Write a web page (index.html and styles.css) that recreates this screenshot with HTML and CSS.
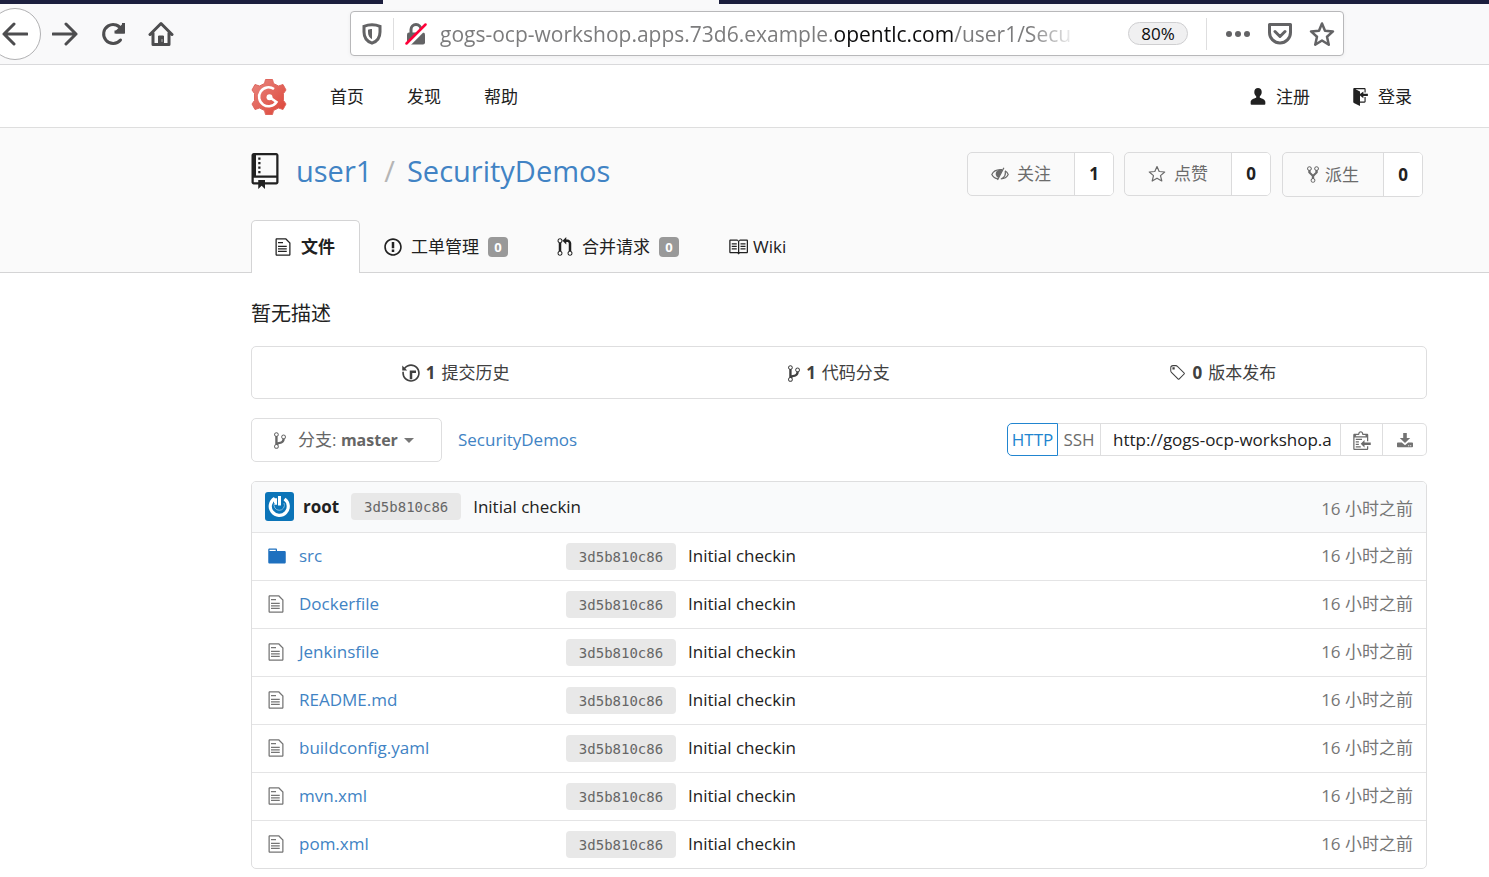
FILE: index.html
```html
<!DOCTYPE html>
<html lang="zh-CN">
<head>
<meta charset="utf-8">
<title>user1/SecurityDemos</title>
<link rel="stylesheet" href="styles.css">
</head>
<body>
<svg class="sprite" aria-hidden="true">
  <symbol id="repo" viewBox="0 0 12 16"><path d="M4 9H3V8h1v1zm0-3H3v1h1V6zm0-2H3v1h1V4zm0-2H3v1h1V2zm8-1v12c0 .55-.45 1-1 1H6v2l-1.5-1.5L3 16v-2H1c-.55 0-1-.45-1-1V1c0-.55.45-1 1-1h10c.55 0 1 .45 1 1zm-1 10H1v2h2v-1h3v1h5v-2zm0-10H2v9h9V1z"/></symbol>
  <symbol id="file" viewBox="0 0 12 16"><path d="M6 5H2V4h4v1zM2 8h7V7H2v1zm0 2h7V9H2v1zm0 2h7v-1H2v1zm10-7.5V14c0 .55-.45 1-1 1H1c-.55 0-1-.45-1-1V2c0-.55.45-1 1-1h7.5L12 4.5zM11 5L8 2H1v12h10V5z"/></symbol>
  <symbol id="issue" viewBox="0 0 14 16"><path d="M7 2.3c3.14 0 5.7 2.56 5.7 5.7s-2.56 5.7-5.7 5.7A5.71 5.71 0 0 1 1.3 8c0-3.14 2.56-5.7 5.7-5.7zM7 1C3.14 1 0 4.14 0 8s3.14 7 7 7 7-3.14 7-7-3.14-7-7-7zm1 3H6v5h2V4zm0 6H6v2h2v-2z"/></symbol>
  <symbol id="pull" viewBox="0 0 12 16"><path d="M11 11.28V5c-.03-.78-.34-1.47-.94-2.06C9.46 2.35 8.78 2.03 8 2H7V0L4 3l3 3V4h1c.27.02.48.11.69.31.21.2.3.42.31.69v6.28A1.993 1.993 0 0 0 10 15a1.993 1.993 0 0 0 1-3.72zm-1 2.92c-.66 0-1.2-.55-1.2-1.2 0-.65.55-1.2 1.2-1.2.65 0 1.2.55 1.2 1.2 0 .65-.55 1.2-1.2 1.2zM4 3c0-1.11-.89-2-2-2a1.993 1.993 0 0 0-1 3.72v6.56A1.993 1.993 0 0 0 2 15a1.993 1.993 0 0 0 1-3.72V4.72c.59-.34 1-.98 1-1.72zm-.8 10c0 .66-.55 1.2-1.2 1.2-.65 0-1.2-.55-1.2-1.2 0-.65.55-1.2 1.2-1.2.65 0 1.2.55 1.2 1.2zM2 4.2C1.34 4.2.8 3.65.8 3c0-.65.55-1.2 1.2-1.2.65 0 1.2.55 1.2 1.2 0 .65-.55 1.2-1.2 1.2z"/></symbol>
  <symbol id="book" viewBox="0 0 16 16"><path d="M3 5h4v1H3V5zm0 3h4V7H3v1zm0 2h4V9H3v1zm11-5h-4v1h4V5zm0 2h-4v1h4V7zm0 2h-4v1h4V9zm2-6v9c0 .55-.45 1-1 1H9.5l-1 1-1-1H2c-.55 0-1-.45-1-1V3c0-.55.45-1 1-1h5.5l1 1 1-1H15c.55 0 1 .45 1 1zm-8 .5L7.5 3H2v9h6V3.5zm7-.5H9.5l-.5.5V12h6V3z"/></symbol>
  <symbol id="branch" viewBox="0 0 10 16"><path d="M10 5c0-1.11-.89-2-2-2a1.993 1.993 0 0 0-1 3.72v.3c-.02.52-.23.98-.63 1.38-.4.4-.86.61-1.38.63-.83.02-1.48.16-2 .45V4.72a1.993 1.993 0 0 0-1-3.72C.88 1 0 1.89 0 3a2 2 0 0 0 1 1.72v6.56c-.59.35-1 .99-1 1.72 0 1.11.89 2 2 2 1.11 0 2-.89 2-2 0-.53-.2-1-.53-1.36.09-.06.48-.41.59-.47.25-.11.56-.17.94-.17 1.05-.05 1.95-.45 2.75-1.25S8.95 7.77 9 6.73h-.02C9.59 6.37 10 5.73 10 5zM2 1.8c.66 0 1.2.55 1.2 1.2 0 .65-.55 1.2-1.2 1.2C1.35 4.2.8 3.65.8 3c0-.65.55-1.2 1.2-1.2zm0 12.41c-.66 0-1.2-.55-1.2-1.2 0-.65.55-1.2 1.2-1.2.65 0 1.2.55 1.2 1.2 0 .65-.55 1.2-1.2 1.2zm6-8c-.66 0-1.2-.55-1.2-1.2 0-.65.55-1.2 1.2-1.2.65 0 1.2.55 1.2 1.2 0 .65-.55 1.2-1.2 1.2z"/></symbol>
  <symbol id="fork" viewBox="0 0 10 16"><path d="M8 1a1.993 1.993 0 0 0-1 3.72V6L5 8 3 6V4.72A1.993 1.993 0 0 0 2 1a1.993 1.993 0 0 0-1 3.72V6.5l3 3v1.78A1.993 1.993 0 0 0 5 15a1.993 1.993 0 0 0 1-3.72V9.5l3-3V4.72A1.993 1.993 0 0 0 8 1zM2 4.2C1.34 4.2.8 3.65.8 3c0-.65.55-1.2 1.2-1.2.65 0 1.2.55 1.2 1.2 0 .65-.55 1.2-1.2 1.2zm3 10c-.66 0-1.2-.55-1.2-1.2 0-.65.55-1.2 1.2-1.2.65 0 1.2.55 1.2 1.2 0 .65-.55 1.2-1.2 1.2zm3-10c-.66 0-1.2-.55-1.2-1.2 0-.65.55-1.2 1.2-1.2.65 0 1.2.55 1.2 1.2 0 .65-.55 1.2-1.2 1.2z"/></symbol>
  <symbol id="history" viewBox="0 0 14 16"><path d="M8 13H6V6h5v2H8v5zM7 1C4.81 1 2.87 2.02 1.59 3.59L0 2v4h4L2.5 4.5C3.55 3.17 5.17 2.3 7 2.3c3.14 0 5.7 2.56 5.7 5.7s-2.56 5.7-5.7 5.7A5.71 5.71 0 0 1 1.3 8c0-.34.03-.67.09-1H.08C.03 7.33 0 7.66 0 8c0 3.86 3.14 7 7 7s7-3.14 7-7-3.14-7-7-7z"/></symbol>
  <symbol id="tag" viewBox="0 0 14 16"><path d="M7.685 1.72a2.49 2.49 0 0 0-1.76-.726H3.48A2.5 2.5 0 0 0 .994 3.48v2.456c0 .656.269 1.292.726 1.76l6.024 6.024a.99.99 0 0 0 1.402 0l4.563-4.563a.99.99 0 0 0 0-1.402L7.685 1.72zM2.366 7.048A1.54 1.54 0 0 1 1.9 5.925V3.48c0-.874.716-1.58 1.58-1.58h2.456c.418 0 .825.159 1.123.467l6.104 6.094-4.702 4.702-6.094-6.114zm.588-4.095h1.99v1.99h-1.99v-1.99z"/></symbol>
  <symbol id="folder" viewBox="0 0 14 16"><path d="M13 4H7V3c0-.66-.31-1-1-1H1c-.55 0-1 .45-1 1v10c0 .55.45 1 1 1h12c.55 0 1-.45 1-1V5c0-.55-.45-1-1-1zM6 4H1V3h5v1z"/></symbol>
  <symbol id="person" viewBox="0 0 14 16"><path d="M7 0C5 0 3.500 1.500 3.500 3.700c0 1.900.8 3.300 1.800 4.100v1.400C3 10 .2 10.800.1 13.200V15c0 .5.300.8.8.8h12.200c.5 0 .8-.3.8-.8v-1.800C13.800 10.800 11 10 8.700 9.200V7.800c1-.8 1.800-2.200 1.800-4.100C10.500 1.500 9 0 7 0z"/></symbol>
  <symbol id="signin" viewBox="0 0 14 16"><path d="M7 6.75V12h4V8h1v4c0 .55-.45 1-1 1H7v3l-5.45-2.72c-.33-.17-.55-.52-.55-.91V1c0-.55.45-1 1-1h9c.55 0 1 .45 1 1v3h-1V1H3l4 2v2.250L10 3v2h4v2h-4v2L7 6.750z"/></symbol>
  <symbol id="clip" viewBox="0 0 14 16"><path d="M2 13h4v1H2v-1zm5-6H2v1h5V7zm2 3V8l-3 3 3 3v-2h5v-2H9zM4.500 9H2v1h2.500V9zM2 12h2.500v-1H2v1zm9 1h1v2c-.02.28-.11.52-.3.7-.19.18-.42.28-.7.3H1c-.55 0-1-.45-1-1V4c0-.55.45-1 1-1h3c0-1.110.89-2 2-2 1.110 0 2 .89 2 2h3c.55 0 1 .45 1 1v5h-1V6H1v9h10v-2zM2 5h8c0-.55-.45-1-1-1H8c-.55 0-1-.45-1-1s-.45-1-1-1-1 .45-1 1-.45 1-1 1H3c-.55 0-1 .45-1 1z"/></symbol>
  <symbol id="download" viewBox="0 0 16 16"><path d="M6.200 1h3.600v5h3.400L8 11 2.800 6h3.400zM.8 10.500h4L8 13.200l3.200-2.700h4c.4 0 .8.300.8.700v3.300c0 .4-.4.800-.8.800H.8c-.4 0-.8-.4-.8-.8v-3.300c0-.4.4-.7.8-.7zm10.400 2.700v1h1v-1zm2 0v1h1v-1z" fill-rule="evenodd"/></symbol>
  <symbol id="eye" viewBox="0 0 18 16"><path d="M7 12.800C4 12.300 1.900 10.600.8 8.400 2.300 5.400 5.200 3.800 9 3.700h2M14 4.800c1.500.9 2.600 2 3.200 3.600-1.200 2.500-3.600 4.200-7.400 4.500M14.200 5.200c.7 3.400-.8 6.200-3.700 7.600" fill="none" stroke="currentColor" stroke-width="1.200"/><path d="M12 3.500 7.600 12C4.500 10.500 4 7.400 5.600 5.200 7 3.800 9.500 3.500 12 3.500z"/><path d="M12.900 1.800 6.500 14" stroke="currentColor" stroke-width="1.200"/></symbol>
  <symbol id="star" viewBox="0 0 18 18"><path d="m9 1.500 2.200 5 5.500.5-4.200 3.600 1.300 5.400L9 13.200 4.200 16l1.300-5.400L1.300 7l5.500-.5z" fill="none" stroke="currentColor" stroke-width="1.200" stroke-linejoin="round"/></symbol>
</svg>

<header class="browser">
  <div class="tabstrip"><i class="strip-left"></i><i class="strip-active"></i><i class="strip-right"></i></div>
  <div class="toolbar">
    <div class="nav-buttons">
      <button class="tool back" aria-label="后退"><svg viewBox="0 0 26 26"><path d="M25 13H2M12 3 2 13l10 10"/></svg></button>
      <button class="tool" aria-label="前进"><svg viewBox="0 0 26 26"><path d="M1 13h23M14 3l10 10-10 10"/></svg></button>
      <button class="tool" aria-label="刷新"><svg viewBox="0 0 26 26"><path d="M20.500 19A9.500 9.500 0 1 1 22 9.500"/><path d="M23.500 2v9h-9" stroke-linecap="butt" stroke-linejoin="miter"/><path d="M23.500 4v7h-7z" fill="currentColor"/></svg></button>
      <button class="tool" aria-label="主页"><svg viewBox="0 0 26 26"><path d="M2 13.500 13 2.500l11 11M5 12v11.500h16V12"/><path d="M10.500 23v-8h5v8z" fill="currentColor" stroke-width="1"/><path d="M14 18.500v2" stroke="#bbb" stroke-width="1"/></svg></button>
    </div>
    <div class="urlbar">
      <svg class="shield" viewBox="0 0 20 22"><path d="M10 1.800C7 1.800 4.500 2.300 2 3.300V9c0 6 3 9.500 8 11.200C15 18.500 18 15 18 9V3.300C15.500 2.300 13 1.800 10 1.800z" fill="none" stroke="currentColor" stroke-width="3"/><path d="M10 6c-1.500 0-3 .3-4 .7V9c0 3.500 1.500 6 4 7.200z"/></svg>
      <i class="rule"></i>
      <svg class="lock" viewBox="0 0 22 22"><path d="M6 10V6.500a5 5 0 0 1 10 0V10" fill="none" stroke="currentColor" stroke-width="3"/><rect x="2" y="9.500" width="18" height="12" rx="2"/><path d="M2 23 23 2" stroke="#fff" stroke-width="4"/><path d="M1.500 20.500 20.500 1.500" stroke="#ff0039" stroke-width="2.500" stroke-linecap="round"/></svg>
      <div class="address">gogs-ocp-workshop.apps.73d6.example.<span class="domain">opentlc.com</span>/user1/Secu</div>
      <button class="zoom">80%</button>
      <i class="rule"></i>
      <button class="url-tool" aria-label="更多"><svg viewBox="0 0 26 26"><circle cx="4" cy="13" r="3"/><circle cx="13" cy="13" r="3"/><circle cx="22" cy="13" r="3"/></svg></button>
      <button class="url-tool" aria-label="Pocket"><svg viewBox="0 0 26 26"><path d="M2.500 3.500h21v8a10.500 10.500 0 0 1-21 0zM8 10.500l5 5 5-5" fill="none" stroke="currentColor" stroke-width="3" stroke-linejoin="round" stroke-linecap="round"/></svg></button>
      <button class="url-tool" aria-label="收藏"><svg viewBox="0 0 26 26"><path d="m13 2.500 3 7.200 8 .7-6 5.300 1.800 8L13 19.500l-6.800 4.200 1.800-8-6-5.300 8-.7z" fill="none" stroke="currentColor" stroke-width="2.500" stroke-linejoin="round"/></svg></button>
    </div>
  </div>
</header>

<nav class="site-nav">
  <div class="container nav-row">
    <a href="#" class="logo" aria-label="Gogs"><svg viewBox="0 0 36 38"><defs><linearGradient id="red" x1="0" y1="0" x2="1" y2="1"><stop offset="0" stop-color="#e88780"/><stop offset="1" stop-color="#dd4336"/></linearGradient></defs><path d="M14.500 1.500h7l1 4 5 2.500 4.500-1.500 3 5.500-2.500 3.500v7l2.500 3.500-3 5.500-4.500-1.500-5 2.500-1 4h-7l-1-4-5-2.500L4 31.500 1 26l2.500-3.500v-7L1 12l3-5.500L8.500 8l5-2.500z" fill="url(#red)" stroke="#df665d" stroke-linejoin="round"/><path d="M23 11a9.500 9.500 0 1 0 2.500 13L19 19.500" fill="none" stroke="#fff" stroke-width="2.500"/><circle cx="18.500" cy="19.200" r="3" fill="#fff"/></svg></a>
    <a href="#">首页</a><a href="#">发现</a><a href="#">帮助</a>
    <span class="grow"></span>
    <a href="#" class="account"><svg class="person"><use href="#person"/></svg>注册</a>
    <a href="#" class="account"><svg class="signin"><use href="#signin"/></svg>登录</a>
  </div>
</nav>

<section class="repo-head">
  <div class="container">
    <div class="title-row">
      <h1><svg class="repo-icon"><use href="#repo"/></svg><a href="#">user1</a><span class="slash">/</span><a href="#">SecurityDemos</a></h1>
      <div class="actions">
        <div class="action"><button><svg class="i18"><use href="#eye"/></svg>关注</button><a href="#">1</a></div>
        <div class="action"><button><svg class="i18"><use href="#star"/></svg>点赞</button><a href="#">0</a></div>
        <div class="action fork"><button><svg class="narrow"><use href="#fork"/></svg>派生</button><a href="#">0</a></div>
      </div>
    </div>
    <nav class="tabs">
      <a href="#" class="active"><svg class="doc"><use href="#file"/></svg>文件</a>
      <a href="#"><svg class="issue"><use href="#issue"/></svg>工单管理<span class="badge">0</span></a>
      <a href="#"><svg class="pull"><use href="#pull"/></svg>合并请求<span class="badge">0</span></a>
      <a href="#" class="wiki"><svg class="book"><use href="#book"/></svg>Wiki</a>
    </nav>
  </div>
</section>

<main class="container">
  <p class="description">暂无描述</p>
  <div class="stats">
    <a href="#"><svg class="issue"><use href="#history"/></svg><b>1</b>提交历史</a>
    <a href="#"><svg class="narrow"><use href="#branch"/></svg><b>1</b>代码分支</a>
    <a href="#"><svg class="i18"><use href="#tag"/></svg><b>0</b>版本发布</a>
  </div>
  <div class="controls">
    <button class="branch"><svg class="narrow"><use href="#branch"/></svg><span>分支: <b>master</b></span><i class="caret"></i></button>
    <a href="#" class="crumb">SecurityDemos</a>
    <span class="grow"></span>
    <div class="clone">
      <button class="http">HTTP</button><button class="ssh">SSH</button><input type="text" aria-label="克隆地址" value="http://gogs-ocp-workshop.a" readonly><button class="copy" aria-label="复制"><svg class="copy-icon"><use href="#clip"/></svg></button><button class="download" aria-label="下载"><svg class="i16"><use href="#download"/></svg></button>
    </div>
  </div>
  <div class="files">
    <table>
      <colgroup><col class="c-name"><col><col class="c-time"></colgroup>
      <thead><tr><th colspan="2"><div class="commit"><svg class="avatar" viewBox="0 0 29 29"><rect width="29" height="29" rx="3" fill="#0b74b8"/><path d="M9.800 6.500A9 9 0 1 0 19.500 7" fill="none" stroke="#fff" stroke-width="3.200"/><path d="M10.500 6.200v6.500M14.500 4v9.500" fill="none" stroke="#fff" stroke-width="3"/><path d="M9.500 11a5.200 5.200 0 1 0 9.500 0" fill="none" stroke="#85b9db" stroke-width="1"/></svg><a href="#" class="author">root</a><a href="#" class="sha">3d5b810c86</a><span>Initial checkin</span></div></th><td class="time">16 小时之前</td></tr></thead>
      <tbody>
        <tr><td><a href="#" class="entry"><svg class="dir"><use href="#folder"/></svg>src</a></td><td><div class="commit"><a href="#" class="sha">3d5b810c86</a><span>Initial checkin</span></div></td><td class="time">16 小时之前</td></tr>
        <tr><td><a href="#" class="entry"><svg class="doc"><use href="#file"/></svg>Dockerfile</a></td><td><div class="commit"><a href="#" class="sha">3d5b810c86</a><span>Initial checkin</span></div></td><td class="time">16 小时之前</td></tr>
        <tr><td><a href="#" class="entry"><svg class="doc"><use href="#file"/></svg>Jenkinsfile</a></td><td><div class="commit"><a href="#" class="sha">3d5b810c86</a><span>Initial checkin</span></div></td><td class="time">16 小时之前</td></tr>
        <tr><td><a href="#" class="entry"><svg class="doc"><use href="#file"/></svg>README.md</a></td><td><div class="commit"><a href="#" class="sha">3d5b810c86</a><span>Initial checkin</span></div></td><td class="time">16 小时之前</td></tr>
        <tr><td><a href="#" class="entry"><svg class="doc"><use href="#file"/></svg>buildconfig.yaml</a></td><td><div class="commit"><a href="#" class="sha">3d5b810c86</a><span>Initial checkin</span></div></td><td class="time">16 小时之前</td></tr>
        <tr><td><a href="#" class="entry"><svg class="doc"><use href="#file"/></svg>mvn.xml</a></td><td><div class="commit"><a href="#" class="sha">3d5b810c86</a><span>Initial checkin</span></div></td><td class="time">16 小时之前</td></tr>
        <tr><td><a href="#" class="entry"><svg class="doc"><use href="#file"/></svg>pom.xml</a></td><td><div class="commit"><a href="#" class="sha">3d5b810c86</a><span>Initial checkin</span></div></td><td class="time">16 小时之前</td></tr>
      </tbody>
    </table>
  </div>
</main>
</body>
</html>
```
FILE: styles.css
```css
* { box-sizing: border-box; }
body {
  margin: 0;
  background: #fff;
  color: #212121;
  font: 17px/24px "Open Sans", "Noto Sans CJK SC", sans-serif;
}
a { color: inherit; text-decoration: none; }
button, input { font: inherit; color: inherit; background: none; border: 0; margin: 0; padding: 0; }
svg { flex: none; fill: currentColor; display: block; }
.sprite { display: none; }
.grow { flex: 1; }
.container { padding: 0 62px 0 251px; }

.i16 { width: 16px; height: 16px; }
.i18 { width: 18px; height: 18px; }
.issue { width: 18px; height: 20px; }
.doc { width: 16px; height: 20px; }
.pull { width: 16px; height: 20px; }
.book { width: 20px; height: 20px; }
.narrow { width: 12px; height: 19px; }

/* Browser chrome */
.browser { background: #f9f9fa; border-bottom: 1px solid #d9d9db; }
.tabstrip { display: flex; height: 4px; }
.tabstrip i { background: #1c1f3e; }
.strip-left { flex: 383; }
.tabstrip .strip-active { flex: 336; background: #f9f9fa; }
.strip-right { flex: 770; }
.toolbar { display: flex; align-items: center; height: 60px; padding: 0 145px 1px 0; }
.nav-buttons { display: flex; align-items: center; gap: 22px; width: 350px; color: #4d4d4f; }
.tool { width: 26px; height: 26px; }
.tool svg { width: 26px; height: 26px; fill: none; stroke: currentColor; stroke-width: 3; stroke-linecap: round; stroke-linejoin: round; }
.back { width: 52px; height: 52px; margin: 0 -11px 0 -11px; padding: 0 12px; border: 1px solid #b1b1b3; border-radius: 50%; background: #fff; }
.urlbar { flex: 1; min-width: 0; display: flex; align-items: center; height: 45px; padding: 0 8px 0 11px; border: 1px solid #b8b8ba; border-radius: 4px; background: #fff; color: #636365; box-shadow: 0 1px 4px #0000000d; }
.shield { width: 20px; height: 22px; }
.lock { width: 22px; height: 22px; }
.rule { width: 1px; height: 32px; margin: 0 11px; background: #dededf; }
.address { flex: 1; min-width: 0; margin-left: 13px; overflow: hidden; white-space: nowrap; font-size: 21px; line-height: 32px; color: #7c7c7d; mask-image: linear-gradient(to right, #000 590px, transparent 638px); }
.domain { color: #0c0c0d; }
.zoom { width: 60px; height: 23px; margin-right: 7px; border: 1px solid #cfcfd1; border-radius: 12px; background: #f0f0f1; color: #0c0c0d; line-height: 20px; }
.url-tool { width: 26px; height: 26px; margin-left: 16px; }
.rule + .url-tool { margin-left: 7px; }

/* Site navigation */
.site-nav { border-bottom: 1px solid #dedede; }
.nav-row { display: flex; align-items: center; gap: 43px; height: 62px; padding-top: 1px; padding-right: 77px; }
.logo svg { width: 36px; height: 38px; }
.account { display: flex; align-items: center; gap: 10px; }
.account + .account { margin-left: -1px; }
.person { width: 16px; height: 17px; }
.signin { width: 16px; height: 18px; }

/* Repository header */
.repo-head { background: #fafafa; border-bottom: 1px solid #d4d4d5; }
.title-row { display: flex; justify-content: space-between; height: 92px; padding: 24px 4px 0 0; }
h1 { display: flex; align-items: center; height: 38px; margin: 0; font-size: 29px; font-weight: 400; line-height: 38px; }
h1 a, .crumb { color: #4183c4; }
.repo-icon { width: 28px; height: 36px; margin-right: 17px; }
.slash { margin: 0 12px; color: #b5b5b5; }
.actions { display: flex; align-items: flex-start; gap: 10px; }
.action { display: flex; height: 44px; border: 1px solid #dbdbdc; border-radius: 5px; overflow: hidden; }
.action button { display: flex; align-items: center; justify-content: center; gap: 8px; width: 106px; color: #6b6b6b; }
.action a { width: 39px; border-left: 1px solid #dbdbdc; background: #fff; text-align: center; font-weight: 700; line-height: 42px; }
.action.fork { height: 45px; margin-left: 1px; }
.action.fork button { width: 100px; gap: 6px; }
.action.fork a { line-height: 44px; }
.tabs { display: flex; height: 53px; margin-bottom: -1px; }
.tabs a { display: flex; align-items: center; gap: 9px; padding: 1px 25px 0 24px; }
.tabs .active { gap: 10px; padding: 0 24px 0 23px; border: 1px solid #d4d4d5; border-bottom: 0; border-radius: 5px 5px 0 0; background: #fff; font-weight: 700; }
.tabs .wiki { gap: 5px; }
.badge { width: 20px; height: 20px; border-radius: 4px; background: #999; color: #fff; font-size: 13px; font-weight: 700; line-height: 20px; text-align: center; }

/* Repository content */
.description { margin: 29px 0 20px; font-size: 20px; }
.stats { display: grid; grid-template-columns: repeat(3, 1fr); height: 53px; padding: 1px 12px 0; border: 1px solid #dededf; border-radius: 5px; color: #404040; }
.stats a { display: flex; align-items: center; justify-content: center; gap: 6px; }
.controls { display: flex; align-items: center; height: 44px; margin: 19px 0; }
.branch { display: flex; align-items: center; width: 191px; height: 44px; padding-left: 22px; border: 1px solid #dededf; border-radius: 5px; color: #666; }
.branch svg { margin-right: 12px; }
.branch b { font-size: 16px; }
.caret { margin-left: 6px; border: 5px solid transparent; border-top-color: #777; border-bottom: 0; }
.crumb { margin-left: 16px; }
.clone { display: flex; width: 420px; height: 33px; margin-bottom: 1px; color: #6b6b6b; }
.clone button { border: 1px solid #dededf; }
.clone .http { width: 51px; border-color: #2185d0; border-radius: 5px 0 0 5px; color: #2185d0; }
.clone .ssh { width: 43px; border-left: 0; }
.clone input { flex: 1; min-width: 0; padding: 0 0 0 12px; border: 1px solid #dededf; border-width: 1px 0; color: #212121; }
.clone .copy { display: flex; align-items: center; justify-content: center; width: 43px; }
.copy-icon { width: 18px; height: 20px; }
.clone .download { display: flex; align-items: center; justify-content: center; width: 44px; border-left: 0; border-radius: 0 5px 5px 0; color: #737373; }
.files { border: 1px solid #dededf; border-radius: 5px; overflow: hidden; }
table { width: 100%; border-collapse: collapse; table-layout: fixed; }
.c-name { width: 314px; }
.c-time { width: 140px; }
th, td { height: 48px; padding: 0; text-align: left; font-weight: 400; border-top: 1px solid #e4e4e5; }
thead tr { background: #f9fafb; }
thead th, thead td { height: 50px; padding-left: 13px; border: 0; }
thead .time { padding-top: 4px; }
.commit { display: flex; align-items: center; gap: 12px; }
.avatar { width: 29px; height: 29px; }
.author { margin-left: -3px; font-weight: 700; }
.sha { width: 110px; height: 27px; border-radius: 4px; background: #e8e8e8; color: #666; font: 14px/28px "DejaVu Sans Mono", monospace; text-align: center; }
.entry { display: flex; align-items: center; gap: 15px; padding-left: 16px; color: #4183c4; }
.entry .doc { color: #757575; }
.entry .dir { width: 18px; height: 20px; margin-right: -2px; color: #1e70bf; }
td.time { padding-right: 13px; text-align: right; color: #767676; }
```
